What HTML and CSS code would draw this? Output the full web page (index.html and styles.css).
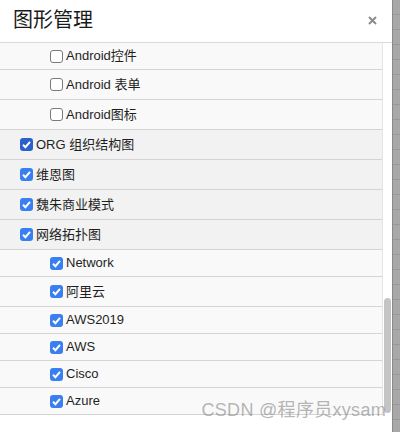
FILE: index.html
```html
<!DOCTYPE html>
<html lang="zh">
<head>
    <meta charset="UTF-8">
    <title>图形管理</title>
    <link rel="stylesheet" href="styles.css">
</head>
<body>
    <div class="screen">
        <div class="dialog">
            <div class="head">
                <span class="title">图形管理</span>
                <svg class="close" width="9" height="9" viewBox="0 0 9 9"><path d="M1 1L8 8M8 1L1 8" stroke="#8c8c8c" stroke-width="2"/></svg>
            </div>
            <div class="body">
                <ul class="list">
                    <li class="row sub"><span class="box"></span>Android控件</li>
                    <li class="row sub cjk"><span class="box"></span>Android 表单</li>
                    <li class="row sub cjk"><span class="box"></span>Android图标</li>
                    <li class="row top cjk"><span class="box on focus"><svg viewBox="0 0 13 13"><path d="M3 6.8L5.4 9.2L10 3.8" /></svg></span>ORG 组织结构图</li>
                    <li class="row top cjk"><span class="box on"><svg viewBox="0 0 13 13"><path d="M3 6.8L5.4 9.2L10 3.8" /></svg></span>维恩图</li>
                    <li class="row top cjk"><span class="box on"><svg viewBox="0 0 13 13"><path d="M3 6.8L5.4 9.2L10 3.8" /></svg></span>魏朱商业模式</li>
                    <li class="row top cjk"><span class="box on"><svg viewBox="0 0 13 13"><path d="M3 6.8L5.4 9.2L10 3.8" /></svg></span>网络拓扑图</li>
                    <li class="row sub"><span class="box on"><svg viewBox="0 0 13 13"><path d="M3 6.8L5.4 9.2L10 3.8" /></svg></span>Network</li>
                    <li class="row sub cjk"><span class="box on"><svg viewBox="0 0 13 13"><path d="M3 6.8L5.4 9.2L10 3.8" /></svg></span>阿里云</li>
                    <li class="row sub"><span class="box on"><svg viewBox="0 0 13 13"><path d="M3 6.8L5.4 9.2L10 3.8" /></svg></span>AWS2019</li>
                    <li class="row sub"><span class="box on"><svg viewBox="0 0 13 13"><path d="M3 6.8L5.4 9.2L10 3.8" /></svg></span>AWS</li>
                    <li class="row sub"><span class="box on"><svg viewBox="0 0 13 13"><path d="M3 6.8L5.4 9.2L10 3.8" /></svg></span>Cisco</li>
                    <li class="row sub"><span class="box on"><svg viewBox="0 0 13 13"><path d="M3 6.8L5.4 9.2L10 3.8" /></svg></span>Azure</li>
                </ul>
                <div class="track"><div class="thumb"></div></div>
            </div>
            <div class="mark">CSDN @程序员xysam</div>
        </div>
        <div class="bg"></div>
    </div>
</body>
</html>
```

FILE: styles.css
```css
* {
    margin: 0;
    padding: 0;
    box-sizing: border-box;
}

body {
    font-family: "Liberation Sans", "Noto Sans CJK SC", sans-serif;
    font-size: 13px;
    color: #1f1f1f;
    background: #fff;
}

.screen {
    display: flex;
    width: 400px;
    height: 432px;
    overflow: hidden;
}

.dialog {
    position: relative;
    width: 392px;
    background: #fff;
}

.bg {
    flex: 1;
    border-left: 1px solid #8a8a8a;
    background: repeating-linear-gradient(to bottom, #a8a8a8 0, #a8a8a8 14px, #999 14px, #999 15px);
}

.head {
    height: 43px;
    border-bottom: 1px solid #d9d9d9;
    display: flex;
    align-items: center;
    justify-content: space-between;
    padding: 0 15px 2px 13px;
}

.title {
    font-size: 20px;
    color: #1a1a1a;
    line-height: 24px;
}

.close {
    display: block;
}

.body {
    display: flex;
}

.list {
    list-style: none;
    width: 383px;
    border-right: 1px solid #e6e6e6;
}

.row {
    display: flex;
    align-items: center;
    height: 27px;
    border-bottom: 1px solid #d4d4d4;
    line-height: 16px;
}

.row.cjk {
    height: 30px;
}

.row.sub {
    background: #f9f9f9;
    padding-left: 50px;
}

.row.top {
    background: #f2f2f2;
    padding-left: 20px;
}

.box {
    width: 13px;
    height: 13px;
    margin-right: 3px;
    border: 1px solid #7a7a7a;
    border-radius: 3px;
    background: #fff;
    flex: none;
}

.box.on {
    border: none;
    background: #3a7ff2;
}

.box.focus {
    background: #2a5fcc;
}

.box svg {
    display: block;
    width: 13px;
    height: 13px;
    fill: none;
    stroke: #fff;
    stroke-width: 2;
}

.track {
    width: 9px;
    padding: 255px 1px 0 1px;
}

.thumb {
    width: 7px;
    height: 115px;
    border-radius: 4px;
    background: #c4c4c4;
}

.mark {
    position: absolute;
    right: 6px;
    bottom: 11px;
    font-size: 18px;
    color: rgba(120, 120, 120, 0.55);
    letter-spacing: 0.3px;
}
```
